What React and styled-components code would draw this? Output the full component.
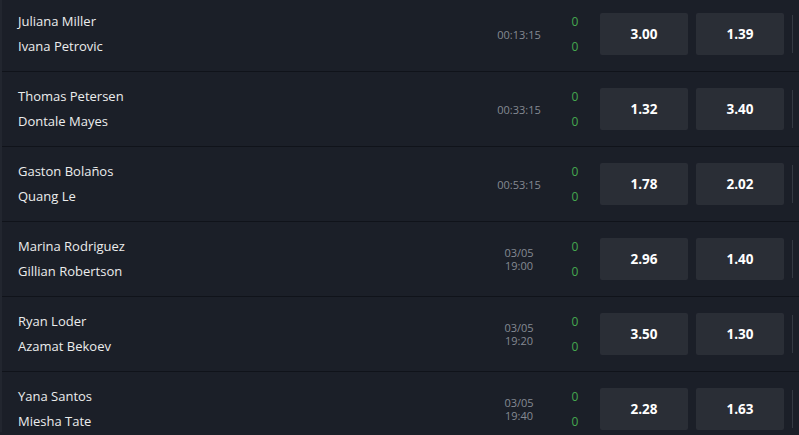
import React from 'react';
import styled, { createGlobalStyle } from 'styled-components';

const GlobalStyle = createGlobalStyle`
  html, body {
    margin: 0;
    padding: 0;
    background: #1b1f28;
    overflow: hidden;
  }
`;

const List = styled.div`
  width: 799px;
  height: 435px;
  overflow: hidden;
  margin-top: -3px;

  font-family: "Open Sans", "Noto Sans", sans-serif;
  background: #1b1f28;
  border-left: 2px solid #22262f;
  box-sizing: border-box;
`;

const Row = styled.div`
  display: flex;
  align-items: center;
  height: 74px;

  border-bottom: 1px solid #10131a;
`;

const Players = styled.div`
  display: flex;
  flex-direction: column;
  gap: 6px;
  flex: 1;
  padding-left: 16px;

  font-size: 13px;
  font-weight: 500;
  line-height: 19px;
  color: #eceded;
`;

const Time = styled.div`
  width: 60px;

  font-size: 11px;
  line-height: 13px;
  text-align: center;
  color: #858a93;
`;

const Scores = styled.div`
  display: flex;
  flex-direction: column;
  gap: 6px;
  width: 22px;
  margin-left: 15px;
  margin-right: 14px;

  font-size: 12px;
  line-height: 19px;
  text-align: center;
  color: #45a84f;
`;

const Odd = styled.button`
  width: 88px;
  height: 42px;
  margin-right: ${({ $gap }) => $gap}px;
  padding: 0;

  font-family: inherit;
  font-size: 13.5px;
  font-weight: 700;
  color: #ffffff;

  border: none;
  border-radius: 2px;
  background: #2a2e36;
  cursor: pointer;
`;

const Edge = styled.div`
  width: 6px;
  height: 38px;

  border-left: 1px solid #353a43;
`;

const matches = [
  { home: 'Juliana Miller', away: 'Ivana Petrovic', time: ['00:13:15'], odds: ['3.00', '1.39'] },
  { home: 'Thomas Petersen', away: 'Dontale Mayes', time: ['00:33:15'], odds: ['1.32', '3.40'] },
  { home: 'Gaston Bolaños', away: 'Quang Le', time: ['00:53:15'], odds: ['1.78', '2.02'] },
  { home: 'Marina Rodriguez', away: 'Gillian Robertson', time: ['03/05', '19:00'], odds: ['2.96', '1.40'] },
  { home: 'Ryan Loder', away: 'Azamat Bekoev', time: ['03/05', '19:20'], odds: ['3.50', '1.30'] },
  { home: 'Yana Santos', away: 'Miesha Tate', time: ['03/05', '19:40'], odds: ['2.28', '1.63'] },
];

export default function App() {
  return (
    <>
      <GlobalStyle />
      <List>
        {matches.map((m) => (
          <Row key={m.home}>
            <Players>
              <span>{m.home}</span>
              <span>{m.away}</span>
            </Players>
            <Time>
              {m.time.map((t) => (
                <div key={t}>{t}</div>
              ))}
            </Time>
            <Scores>
              <span>0</span>
              <span>0</span>
            </Scores>
            <Odd type="button" $gap={8}>{m.odds[0]}</Odd>
            <Odd type="button" $gap={8}>{m.odds[1]}</Odd>
            <Edge />
          </Row>
        ))}
      </List>
    </>
  );
}
